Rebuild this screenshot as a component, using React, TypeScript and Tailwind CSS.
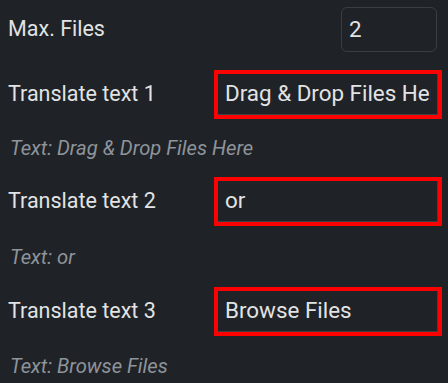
import React from "react";

const font = { fontFamily: "Roboto, 'Noto Sans', sans-serif" };

function Field({ label, value, helper, top, helperTop }: { label: string; value: string; helper: string; top: string; helperTop: string }) {
  return (
    <>
      <div className={`flex items-center justify-between ${top}`}>
        <span className="text-[21.5px] text-[#e2e3e4]">{label}</span>
        <div className="w-[228px] h-[49px] shrink-0 border-[4px] border-[#ff0000] flex items-center">
          <div className="flex-1 min-w-0 h-full flex items-center pl-[7px] pr-[6px] border-r border-b border-[#3d4044]">
            <div className="flex-1 min-w-0 overflow-hidden whitespace-nowrap text-[22.4px] text-[#e2e3e4]">{value}</div>
          </div>
        </div>
      </div>
      <div className={`h-[24px] ${helperTop} flex items-center pl-[2px] text-[20.2px] italic text-[#8e949b]`}>{helper}</div>
    </>
  );
}

export default function App() {
  return (
    <div className="w-[448px] h-[383px] bg-[#1f2226] pl-[8px] pr-[6px] overflow-hidden" style={font}>
      <div className="pt-[7px] flex items-center justify-between">
        <span className="text-[21.5px] text-[#e2e3e4]">Max. Files</span>
        <div className="w-[96px] h-[45px] mr-[5px] rounded-[6px] border border-[#3a3d41] flex items-center pl-[7px] text-[22.4px] text-[#e2e3e4]">
          2
        </div>
      </div>
      <Field top="mt-[18px]" helperTop="mt-[17px]" label="Translate text 1" value="Drag & Drop Files Here" helper="Text: Drag & Drop Files Here" />
      <Field top="mt-[17px]" helperTop="mt-[19px]" label="Translate text 2" value="or" helper="Text: or" />
      <Field top="mt-[18px]" helperTop="mt-[18px]" label="Translate text 3" value="Browse Files" helper="Text: Browse Files" />
    </div>
  );
}
